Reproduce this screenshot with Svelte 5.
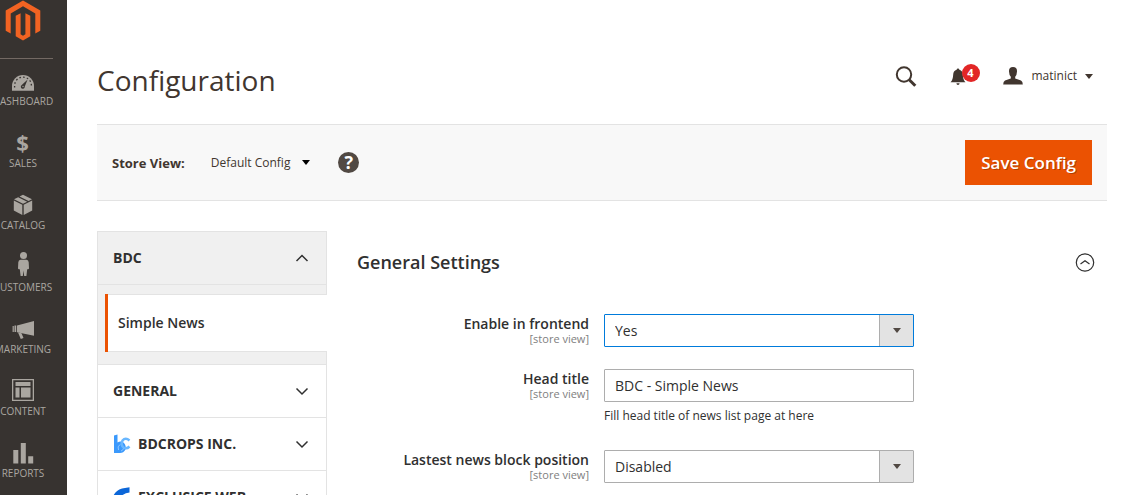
<script>
  const menu = [
    { id: 'dashboard', label: 'DASHBOARD' },
    { id: 'sales', label: 'SALES' },
    { id: 'catalog', label: 'CATALOG' },
    { id: 'customers', label: 'CUSTOMERS' },
    { id: 'marketing', label: 'MARKETING' },
    { id: 'content', label: 'CONTENT' },
    { id: 'reports', label: 'REPORTS' }
  ];
  let enabled = $state('Yes');
  let headTitle = $state('BDC - Simple News');
  let position = $state('Disabled');
</script>

{#snippet chevron(up)}
  <svg class="chevron" width="14" height="14" viewBox="0 0 14 14" aria-hidden="true">
    <path d={up ? 'M1.5 10 7 4.5 12.5 10' : 'M1.5 4.5 7 10 12.5 4.5'} />
  </svg>
{/snippet}

<div class="app">
  <aside class="sidebar">
    <div class="rail">
      <a class="logo" href="#home" aria-label="Magento">
        <svg width="36" height="41" viewBox="0 0 36 41" aria-hidden="true">
          <path d="M18 .5 35.3 10.5V30.8L30.3 33.4V13.4L18 6.2 5.7 13.4V33.4L.7 30.8V10.5Z" />
          <path d="M10.7 15.8 15.6 13.2V34.3L18 35.7 20.4 34.3V13.2L25.3 15.8V36.3L18 40.6 10.7 36.3Z" />
        </svg>
      </a>
      <nav class="menu">
        {#each menu as item}
          <a href={'#' + item.id}>
            <svg width="28" height="28" viewBox="0 0 28 28" aria-hidden="true">
              {#if item.id === 'dashboard'}
                <path d="M3 23.7V19a11 11 0 0 1 22 0v4.700Z" />
                <path class="cut-line" stroke-dasharray="1.600 2.200" d="M5.600 20.500v-2A8.400 8.400 0 0 1 22.400 18.500v2" />
                <path class="cut" d="M18.600 12.400 15.800 19.600a2 2 0 1 1-3-1.600Z" />
                <circle cx="14" cy="19.500" r=".7" />
              {:else if item.id === 'sales'}
                <text x="13.500" y="22" text-anchor="middle">$</text>
              {:else if item.id === 'catalog'}
                <path d="M14 3.800 23 8.300 19.500 10 10.500 5.600Z" />
                <path d="M9.200 6.200 18.200 10.700 14 12.800 5 8.300Z" />
                <path d="M4.800 9.500 13.300 13.800V24L4.800 19.600Z" />
                <path d="M23.200 9.500 14.700 13.800V24L23.200 19.600Z" />
              {:else if item.id === 'customers'}
                <circle cx="14.500" cy="2.500" r="3.500" />
                <path d="M11.500 6.800h6q2 0 2.200 2.500l.3 6q0 1-1 1h-.8L17.400 23h-2.200L14.500 17.500 13.800 23h-2.200L10.800 16.300H10q-1 0-1-1l.3-6q.2-2.500 2.200-2.500Z" />
              {:else if item.id === 'marketing'}
                <path d="M8 10.500 25 6V20.700L8 17.300Z" />
                <path d="M3.600 11h1.200v6H3.600ZM5.500 10.500H7.200V17H5.500ZM9 17.500 12.500 18.200 14.500 23 11.800 24Z" />
              {:else if item.id === 'content'}
                <path fill-rule="evenodd" d="M3 2H25V24H3ZM4.300 3.300V22.700H23.700V3.300Z" />
                <path d="M6.500 5H21.500V9H6.500ZM6.500 10.500H10.500V20.500H6.500ZM12 10.500H21.500V20.500H12Z" />
              {:else}
                <path d="M4.300 11H9.300V24.500H4.300ZM11.800 4H16.800V24.500H11.800ZM19.200 17.300H24.200V24.500H19.200Z" />
              {/if}
            </svg>
            <span>{item.label}</span>
          </a>
        {/each}
      </nav>
    </div>
  </aside>

  <main class="page">
    <header class="top">
      <h1>Configuration</h1>
      <div class="tools">
        <button class="icon" aria-label="Search">
          <svg width="22" height="22" viewBox="0 0 22 22" aria-hidden="true">
            <circle class="ring" cx="9" cy="9.500" r="7.200" />
            <path class="handle" d="M14.200 14.700 20.300 20.800" />
          </svg>
        </button>
        <button class="icon bell" aria-label="Notifications">
          <svg width="16" height="18" viewBox="0 0 16 18" aria-hidden="true">
            <path d="M8 1.500q1.200 0 1.400 1.200Q12.800 4 12.800 7.500 13 13 15.500 15.200H.5Q3 13 3.200 7.500 3.200 4 6.600 2.700 6.800 1.500 8 1.500ZM6.400 16.300H9.600Q9.500 18 8 18 6.500 18 6.400 16.300Z" />
          </svg>
          <span class="badge">4</span>
        </button>
        <button class="account">
          <svg width="20" height="18" viewBox="0 0 20 18" aria-hidden="true">
            <path d="M10 0q4.200 0 4 4.500-.2 4-1.800 5.300v1.700l5.800 2q1.800.8 1.800 4H.2q0-3.200 1.800-4l5.800-2V9.800Q6.200 8.500 6 4.500 5.800 0 10 0Z" />
          </svg>
          <span>matinict</span>
          <i class="caret"></i>
        </button>
      </div>
    </header>

    <section class="toolbar">
      <span class="scope-label">Store View:</span>
      <button class="scope">Default Config <i class="caret"></i></button>
      <button class="help" aria-label="Help">?</button>
      <button class="save">Save Config</button>
    </section>

    <div class="columns">
      <nav class="tabs">
        <button class="tab open">BDC {@render chevron(true)}</button>
        <div class="tab-items">
          <a href="#simple-news">Simple News</a>
        </div>
        <button class="tab">GENERAL {@render chevron(false)}</button>
        <button class="tab">
          <svg class="brand" width="18" height="20" viewBox="0 0 18 20" aria-hidden="true">
            <path fill="#3b99fc" d="M1 1.500 4.500.5V8.500Q8 6.500 11 9 13.500 12 12.500 15.500 10.500 19 7 19H1Z" />
            <path fill="none" stroke="#69b7ff" stroke-width="2.500" d="M16.500 6.500Q12.500 3 9.500 6.500 7.500 11 10.500 13.500 13.500 15.500 16.500 12.500" />
            <path fill="none" stroke="#8cc6ff" d="M5.500 16Q4 12.500 7 10.500M8 17Q10 16.500 10.500 14.500" />
          </svg>
          BDCROPS INC. {@render chevron(false)}
        </button>
        <button class="tab">
          <svg class="brand" width="18" height="20" viewBox="0 0 18 20" aria-hidden="true">
            <path fill="#0b66d8" d="M.5 8.500Q3 3.500 9 1.500L16.500.3V5.500Q12 5.500 8.500 9 5 12.500 9 16 13 18 17 14.500 14 20 7.500 19 1.500 17 3.500 10.500 2.500 9 .5 8.500Z" />
          </svg>
          EXCLUSICE WEB {@render chevron(false)}
        </button>
      </nav>

      <section class="settings">
        <div class="settings-head">
          <h2>General Settings</h2>
          <button class="collapse" aria-label="Collapse General Settings">
            <svg width="20" height="20" viewBox="0 0 20 20" aria-hidden="true">
              <circle cx="10" cy="10.500" r="8.700" />
              <path d="M5.500 12 10 8.700 14.500 12" />
            </svg>
          </button>
        </div>
        <form>
          <div class="field">
            <label for="enabled">Enable in frontend <small>[store view]</small></label>
            <div class="select active">
              <select id="enabled" bind:value={enabled}>
                <option>Yes</option>
                <option>No</option>
              </select>
            </div>
          </div>
          <div class="field">
            <label for="head-title">Head title <small>[store view]</small></label>
            <div>
              <input id="head-title" type="text" bind:value={headTitle} />
              <p>Fill head title of news list page at here</p>
            </div>
          </div>
          <div class="field">
            <label for="position">Lastest news block position <small>[store view]</small></label>
            <div class="select">
              <select id="position" bind:value={position}>
                <option>Disabled</option>
                <option>Left</option>
                <option>Right</option>
              </select>
            </div>
          </div>
        </form>
      </section>
    </div>
  </main>
</div>

<style>
  :global(body) {
    background: #fff;
  }
  .app,
  .app * {
    box-sizing: border-box;
  }
  .app {
    display: flex;
    height: 100vh;
    overflow: hidden;
    color: #41362f;
    font: 14px/20px 'Open Sans', sans-serif;
  }
  button {
    border: 0;
    padding: 0;
    background: none;
    color: inherit;
    font: inherit;
    cursor: pointer;
  }
  a {
    color: inherit;
    text-decoration: none;
  }
  h1,
  h2,
  p {
    margin: 0;
  }
  svg {
    display: block;
    flex: none;
  }

  /* Side menu: the rail is wider than its column and runs off the left edge. */
  .sidebar {
    display: flex;
    flex: none;
    justify-content: flex-end;
    width: 67px;
    overflow: hidden;
    background: #373330;
  }
  .rail {
    flex: none;
    width: 88px;
  }
  .logo {
    display: flex;
    justify-content: center;
    height: 59px;
    margin: 0 14px;
    border-bottom: 1px solid #736963;
  }
  .logo svg {
    fill: #f26322;
  }
  .menu {
    display: flex;
    flex-direction: column;
    gap: 22px;
    padding-top: 8px;
  }
  .menu a {
    display: flex;
    flex-direction: column;
    align-items: center;
    color: #aaa6a0;
    font-size: 10px;
    line-height: 12px;
  }
  .menu svg {
    overflow: visible;
    fill: #aaa6a0;
  }
  .menu text {
    font: 700 22px 'Open Sans', sans-serif;
  }
  .cut {
    fill: #373330;
  }
  .cut-line {
    fill: none;
    stroke: #373330;
    stroke-width: 1.3;
  }

  .page {
    flex: 1;
    min-width: 0;
    padding: 0 26px 0 30px;
  }
  .top {
    display: flex;
    justify-content: space-between;
    align-items: flex-start;
    height: 124px;
    padding: 60px 14px 0 0;
  }
  h1 {
    font-size: 28px;
    font-weight: 400;
    line-height: 40px;
  }
  .tools {
    display: flex;
    align-items: center;
    height: 32px;
  }
  .tools svg {
    fill: #41362f;
  }
  .tools .ring,
  .tools .handle {
    fill: none;
    stroke: #41362f;
    stroke-width: 2;
  }
  .tools .handle {
    stroke-width: 3;
  }
  .bell {
    position: relative;
    margin: 0 37px 0 33px;
  }
  .badge {
    position: absolute;
    top: -3px;
    left: 12px;
    width: 18px;
    height: 18px;
    border-radius: 50%;
    background: #e22626;
    color: #fff;
    font-size: 11px;
    font-weight: 700;
    line-height: 18px;
  }
  .account {
    display: flex;
    align-items: center;
    gap: 8px;
    font-size: 12px;
  }
  .account svg {
    margin-right: 1px;
  }
  .caret {
    border: 4px solid transparent;
    border-top: 5px solid currentColor;
    border-bottom: 0;
  }

  .toolbar {
    display: flex;
    align-items: center;
    padding: 15px;
    border: solid #e3e3e3;
    border-width: 1px 0;
    background: #f8f8f8;
    font-size: 13px;
  }
  .scope-label {
    font-weight: 700;
  }
  .scope {
    display: flex;
    align-items: center;
    gap: 12px;
    margin: 0 28px 0 26px;
    font-size: 12px;
  }
  .scope .caret {
    color: #000;
  }
  .help {
    width: 21px;
    height: 21px;
    border-radius: 50%;
    background: #514943;
    color: #fff;
    font-size: 18px;
    font-weight: 700;
    line-height: 21px;
  }
  .save {
    margin-left: auto;
    padding: 0 16px;
    background: #eb5202;
    color: #fff;
    font-size: 17px;
    font-weight: 600;
    line-height: 45px;
    text-shadow: 1px 1px 0 rgba(0, 0, 0, 0.25);
  }

  .columns {
    display: flex;
    align-items: flex-start;
    gap: 30px;
    padding-top: 30px;
  }
  .tabs {
    flex: none;
    width: 230px;
    color: #303030;
  }
  .tab {
    display: flex;
    align-items: center;
    width: 100%;
    height: 54px;
    margin-bottom: -1px;
    padding: 0 17px 0 15px;
    border: 1px solid #e3e3e3;
    background: #fff;
    font-weight: 700;
  }
  .tab.open {
    margin-bottom: 0;
    background: #f0f0f0;
  }
  .chevron {
    margin-left: auto;
    fill: none;
    stroke: #303030;
    stroke-width: 1.5;
  }
  .brand {
    margin-right: 7px;
  }
  .tab-items {
    padding: 9px 0 12px 7px;
    border-left: 1px solid #e3e3e3;
    background: linear-gradient(#e3e3e3, #e3e3e3) right / 1px 100% no-repeat #f0f0f0;
  }
  .tab-items a {
    display: block;
    border: solid #e3e3e3;
    border-width: 1px 0;
    background: #fff;
    box-shadow: -3px 0 #eb5202;
    margin-left: 3px;
    padding: 0 10px;
    font-weight: 600;
    line-height: 56px;
  }

  .settings {
    flex: 1;
    min-width: 0;
    color: #303030;
  }
  .settings-head {
    display: flex;
    justify-content: space-between;
    align-items: center;
    height: 62px;
    padding-right: 12px;
  }
  h2 {
    font-size: 18px;
    font-weight: 600;
    line-height: 24px;
  }
  .collapse svg {
    fill: none;
    stroke: #303030;
    stroke-width: 1.2;
  }
  form {
    display: flex;
    flex-direction: column;
    gap: 22px;
    padding-top: 21px;
  }
  .field {
    display: grid;
    grid-template-columns: 232fr 310fr 178fr;
    align-items: start;
    column-gap: 15px;
  }
  label {
    font-weight: 600;
    text-align: right;
  }
  small {
    display: block;
    color: #808080;
    font-size: 11px;
    font-weight: 400;
    line-height: 10px;
  }
  .select {
    position: relative;
  }
  input,
  select {
    display: block;
    appearance: none;
    width: 100%;
    height: 33px;
    padding: 0 10px;
    border: 1px solid #adadad;
    border-radius: 1px;
    background: #fff;
    color: #303030;
    font: inherit;
  }
  select {
    padding-right: 42px;
    background: linear-gradient(90deg, #adadad 1px, #e3e3e3 1px) right / 34px 100% no-repeat #fff;
  }
  .active select {
    border-color: #007bdb;
  }
  .select::after {
    position: absolute;
    top: 14px;
    right: 13px;
    border: 4px solid transparent;
    border-top: 5px solid #514943;
    border-bottom: 0;
    content: '';
    pointer-events: none;
  }
  .field p {
    padding: 4px 0 2px;
    font-size: 12px;
    line-height: 20px;
  }
</style>
